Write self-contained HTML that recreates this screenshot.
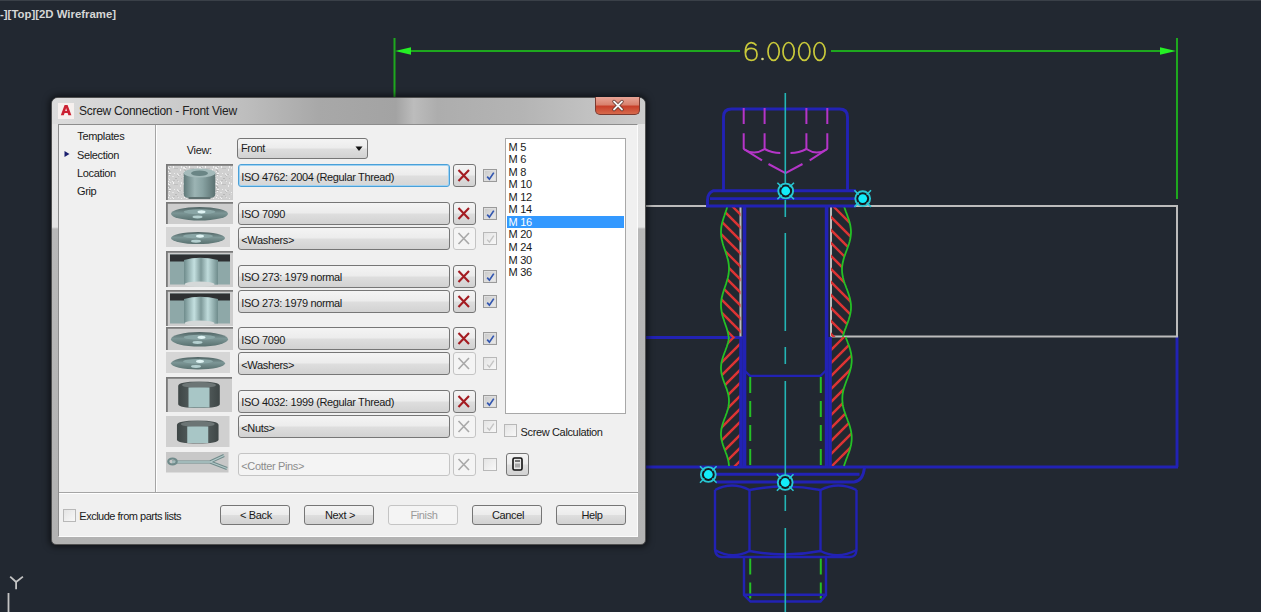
<!DOCTYPE html>
<html><head><meta charset="utf-8"><style>
html,body{margin:0;padding:0;width:1261px;height:612px;overflow:hidden;background:#222831;}
body{position:relative;font-family:"Liberation Sans",sans-serif;}
.a{position:absolute;box-sizing:border-box;}
.t{position:absolute;line-height:1;white-space:nowrap;}
.frame{border:1px solid #505050;border-radius:7px 7px 5px 5px;background:linear-gradient(180deg,#e2e2e2 0px,#e4e4e4 129px,#b8b8b8 131px,#b2b2b2 100%);box-shadow:0 0 6px 2px rgba(0,0,0,0.55);}
.titlebar{border-radius:6px 6px 0 0;background:linear-gradient(90deg,#dcdcdc 0%,#d2d2d2 15%,#bdbdbd 33%,#a8a8a8 45%,#a3a3a3 58%,#bcbcbc 61%,#adadad 65%,#b4b4b4 79%,#c2c2c2 91%,#cccccc 100%);}
.closeb{border:1px solid #7a3a30;border-top:none;border-radius:0 0 5px 5px;background:linear-gradient(180deg,#e8a496 0%,#d9826e 45%,#c8402a 55%,#d66a4c 100%);}
.client{border:1px solid;border-color:#8d8d8d #fcfcfc #fcfcfc #8d8d8d;background:#f0f0f0;}
.btn{border:1px solid #767676;border-radius:3px;background:linear-gradient(180deg,#f4f4f4 0%,#ececec 48%,#dedede 52%,#d2d2d2 100%);}
.btn.focus{border:1px solid #4aa0d8;box-shadow:inset 0 0 0 1px #9fd2f2;background:linear-gradient(180deg,#f4f4f4 0%,#ececec 48%,#dedede 52%,#d6d6d6 100%);}
.btndis{border:1px solid #c4c4c4;border-radius:3px;background:#f4f4f4;}
.fdis{border:1px solid #c4c4c4;border-radius:3px;background:#f4f4f4;}
.cb{border:1px solid #9a9a9a;background:linear-gradient(135deg,#c8c8c8,#ececec);box-shadow:inset 0 0 0 1px #dedede;}
.cbdis{border:1px solid #b8b8b8;background:linear-gradient(135deg,#e4e4e4,#f8f8f8);}
.lst{border:1px solid #a8a8a8;background:#fff;}
</style></head><body>

<svg class="a" style="left:0;top:0" width="1261" height="612" viewBox="0 0 1261 612">
<rect x="0" y="0" width="1261" height="1" fill="#3a4048"/>
<text x="0" y="18" font-family="Liberation Sans" font-weight="bold" font-size="11.4" fill="#d6d6d6">-][Top][2D Wireframe]</text>
<!-- Y axis -->
<path d="M10.2,576.6 L16.1,582 L22.9,576.6 M16.1,582 V589.3 M8.5,593 V612" stroke="#c4c4c4" stroke-width="1.8" fill="none"/>
<!-- dimension -->
<g stroke="#1ea81e" stroke-width="2" fill="none">
<line x1="394.5" y1="38" x2="394.5" y2="100"/>
<line x1="1177" y1="38" x2="1177" y2="199"/>
<line x1="405" y1="51" x2="740" y2="51"/>
<line x1="831" y1="51" x2="1165" y2="51"/>
</g>
<polygon fill="#25f025" points="395,51 411,47.3 411,54.7"/>
<polygon fill="#25f025" points="1176,51 1160,47.3 1160,54.7"/>
<g stroke="#c9c93a" stroke-width="1.7" fill="none">
<path d="M756.5,45.5 Q754,42.5 751,42.6 Q745.5,43.5 745.3,52 Q745.3,60.3 751.2,60.3 Q757,60.3 757,54.2 Q757,48.3 751.2,48.3 Q746,48.3 745.5,53.5"/>
<ellipse cx="773.6" cy="51.4" rx="5.6" ry="8.9"/>
<ellipse cx="788.6" cy="51.4" rx="5.6" ry="8.9"/>
<ellipse cx="804.3" cy="51.4" rx="5.6" ry="8.9"/>
<ellipse cx="819.5" cy="51.4" rx="5.6" ry="8.9"/>
</g>
<circle cx="762.5" cy="59" r="1.3" fill="#d8d880"/>
<!-- plates -->
<g stroke="#2222b4" stroke-width="2.9" fill="none">
<line x1="640" y1="337.5" x2="744" y2="337.5"/>
<polyline points="1177,336 1177,467"/>
<line x1="640" y1="467" x2="1178" y2="467"/>
</g>
<g stroke="#bcbcbc" stroke-width="2" fill="none">
<line x1="640" y1="206" x2="708" y2="206"/>
<polyline points="853,206 1177,206 1177,336.5 831,336.5"/>
<line x1="740.5" y1="206" x2="740.5" y2="336.5"/>
<line x1="831" y1="206" x2="831" y2="336.5"/>
</g>
<defs>
<clipPath id="c1"><path d="M727.5,206.0 L726.9,208.0 L726.3,210.0 L725.6,212.0 L724.9,214.0 L724.3,216.0 L723.6,218.0 L723.0,220.0 L722.4,222.0 L721.9,224.0 L721.5,226.0 L721.2,228.0 L721.1,230.0 L721.0,232.0 L721.1,234.0 L721.2,236.0 L721.5,238.0 L721.9,240.0 L722.4,242.0 L722.9,244.0 L723.5,246.0 L724.2,248.0 L724.9,250.0 L725.6,252.0 L726.2,254.0 L726.9,256.0 L727.4,258.0 L728.0,260.0 L728.4,262.0 L728.7,264.0 L728.9,266.0 L729.0,268.0 L729.0,270.0 L728.8,272.0 L728.6,274.0 L728.2,276.0 L727.8,278.0 L727.2,280.0 L726.6,282.0 L726.0,284.0 L725.3,286.0 L724.6,288.0 L723.9,290.0 L723.3,292.0 L722.7,294.0 L722.2,296.0 L721.7,298.0 L721.4,300.0 L721.1,302.0 L721.0,304.0 L721.0,306.0 L721.1,308.0 L721.4,310.0 L721.7,312.0 L722.1,314.0 L722.6,316.0 L723.2,318.0 L723.9,320.0 L724.5,322.0 L725.2,324.0 L725.9,326.0 L726.6,328.0 L727.2,330.0 L727.7,332.0 L728.2,334.0 L728.5,336.0 L728.7,337.0 L740.5,337.0 L740.5,206.0 Z"/></clipPath>
<clipPath id="c2"><path d="M728.9,337.0 L728.7,339.0 L728.4,341.0 L727.9,343.0 L727.3,345.0 L726.7,347.0 L725.9,349.0 L725.2,351.0 L724.4,353.0 L723.7,355.0 L723.0,357.0 L722.4,359.0 L721.9,361.0 L721.4,363.0 L721.2,365.0 L721.0,367.0 L721.0,369.0 L721.2,371.0 L721.4,373.0 L721.9,375.0 L722.4,377.0 L723.0,379.0 L723.7,381.0 L724.4,383.0 L725.2,385.0 L725.9,387.0 L726.7,389.0 L727.3,391.0 L727.9,393.0 L728.4,395.0 L728.7,397.0 L728.9,399.0 L729.0,401.0 L728.9,403.0 L728.7,405.0 L728.4,407.0 L727.9,409.0 L727.3,411.0 L726.7,413.0 L725.9,415.0 L725.2,417.0 L724.4,419.0 L723.7,421.0 L723.0,423.0 L722.4,425.0 L721.9,427.0 L721.4,429.0 L721.2,431.0 L721.0,433.0 L721.0,435.0 L721.2,437.0 L721.4,439.0 L721.9,441.0 L722.4,443.0 L723.0,445.0 L723.7,447.0 L724.4,449.0 L725.2,451.0 L725.9,453.0 L726.7,455.0 L727.3,457.0 L727.9,459.0 L728.4,461.0 L728.7,463.0 L728.9,465.0 L729.0,466.0 L740.0,466.0 L740.0,337.0 Z"/></clipPath>
<clipPath id="c3"><path d="M843.9,206.0 L844.6,208.0 L845.3,210.0 L846.0,212.0 L846.8,214.0 L847.5,216.0 L848.2,218.0 L848.9,220.0 L849.5,222.0 L850.0,224.0 L850.4,226.0 L850.7,228.0 L850.9,230.0 L851.0,232.0 L850.9,234.0 L850.7,236.0 L850.4,238.0 L850.0,240.0 L849.5,242.0 L848.9,244.0 L848.2,246.0 L847.5,248.0 L846.8,250.0 L846.0,252.0 L845.3,254.0 L844.6,256.0 L843.9,258.0 L843.4,260.0 L842.9,262.0 L842.5,264.0 L842.2,266.0 L842.0,268.0 L842.0,270.0 L842.1,272.0 L842.3,274.0 L842.7,276.0 L843.1,278.0 L843.6,280.0 L844.2,282.0 L844.9,284.0 L845.7,286.0 L846.4,288.0 L847.2,290.0 L847.9,292.0 L848.6,294.0 L849.2,296.0 L849.8,298.0 L850.2,300.0 L850.6,302.0 L850.9,304.0 L851.0,306.0 L851.0,308.0 L850.9,310.0 L850.6,312.0 L850.2,314.0 L849.8,316.0 L849.2,318.0 L848.6,320.0 L847.9,322.0 L847.2,324.0 L846.4,326.0 L845.7,328.0 L844.9,330.0 L844.2,332.0 L843.6,334.0 L843.1,336.0 L842.9,337.0 L831.0,337.0 L831.0,206.0 Z"/></clipPath>
<clipPath id="c4"><path d="M845.7,337.0 L846.4,339.0 L847.2,341.0 L847.9,343.0 L848.7,345.0 L849.4,347.0 L850.0,349.0 L850.5,351.0 L851.0,353.0 L851.3,355.0 L851.6,357.0 L851.7,359.0 L851.7,361.0 L851.6,363.0 L851.3,365.0 L851.0,367.0 L850.5,369.0 L850.0,371.0 L849.4,373.0 L848.7,375.0 L847.9,377.0 L847.2,379.0 L846.4,381.0 L845.7,383.0 L845.0,385.0 L844.3,387.0 L843.7,389.0 L843.2,391.0 L842.8,393.0 L842.5,395.0 L842.4,397.0 L842.3,399.0 L842.4,401.0 L842.5,403.0 L842.8,405.0 L843.2,407.0 L843.7,409.0 L844.3,411.0 L845.0,413.0 L845.7,415.0 L846.4,417.0 L847.2,419.0 L847.9,421.0 L848.7,423.0 L849.4,425.0 L850.0,427.0 L850.5,429.0 L851.0,431.0 L851.3,433.0 L851.6,435.0 L851.7,437.0 L851.7,439.0 L851.6,441.0 L851.3,443.0 L851.0,445.0 L850.5,447.0 L850.0,449.0 L849.4,451.0 L848.7,453.0 L847.9,455.0 L847.2,457.0 L846.4,459.0 L845.7,461.0 L845.0,463.0 L844.3,465.0 L844.0,466.0 L831.0,466.0 L831.0,337.0 Z"/></clipPath>
</defs>
<g stroke="#dc3434" stroke-width="2.3" fill="none">
<path clip-path="url(#c1)" d="M715.0,163.0 L742.0,190.0 M715.0,176.0 L742.0,203.0 M715.0,189.0 L742.0,216.0 M715.0,202.0 L742.0,229.0 M715.0,215.0 L742.0,242.0 M715.0,228.0 L742.0,255.0 M715.0,241.0 L742.0,268.0 M715.0,254.0 L742.0,281.0 M715.0,267.0 L742.0,294.0 M715.0,280.0 L742.0,307.0 M715.0,293.0 L742.0,320.0 M715.0,306.0 L742.0,333.0 M715.0,319.0 L742.0,346.0 M715.0,332.0 L742.0,359.0 M715.0,345.0 L742.0,372.0"/>
<path clip-path="url(#c3)" d="M829.0,163.0 L856.0,190.0 M829.0,176.0 L856.0,203.0 M829.0,189.0 L856.0,216.0 M829.0,202.0 L856.0,229.0 M829.0,215.0 L856.0,242.0 M829.0,228.0 L856.0,255.0 M829.0,241.0 L856.0,268.0 M829.0,254.0 L856.0,281.0 M829.0,267.0 L856.0,294.0 M829.0,280.0 L856.0,307.0 M829.0,293.0 L856.0,320.0 M829.0,306.0 L856.0,333.0 M829.0,319.0 L856.0,346.0 M829.0,332.0 L856.0,359.0 M829.0,345.0 L856.0,372.0"/>
<path clip-path="url(#c2)" d="M715.0,317.0 L745.0,287.0 M715.0,330.0 L745.0,300.0 M715.0,343.0 L745.0,313.0 M715.0,356.0 L745.0,326.0 M715.0,369.0 L745.0,339.0 M715.0,382.0 L745.0,352.0 M715.0,395.0 L745.0,365.0 M715.0,408.0 L745.0,378.0 M715.0,421.0 L745.0,391.0 M715.0,434.0 L745.0,404.0 M715.0,447.0 L745.0,417.0 M715.0,460.0 L745.0,430.0 M715.0,473.0 L745.0,443.0 M715.0,486.0 L745.0,456.0 M715.0,499.0 L745.0,469.0 M715.0,512.0 L745.0,482.0"/>
<path clip-path="url(#c4)" d="M825.0,317.0 L856.0,286.0 M825.0,330.0 L856.0,299.0 M825.0,343.0 L856.0,312.0 M825.0,356.0 L856.0,325.0 M825.0,369.0 L856.0,338.0 M825.0,382.0 L856.0,351.0 M825.0,395.0 L856.0,364.0 M825.0,408.0 L856.0,377.0 M825.0,421.0 L856.0,390.0 M825.0,434.0 L856.0,403.0 M825.0,447.0 L856.0,416.0 M825.0,460.0 L856.0,429.0 M825.0,473.0 L856.0,442.0 M825.0,486.0 L856.0,455.0 M825.0,499.0 L856.0,468.0 M825.0,512.0 L856.0,481.0"/>
</g>
<g stroke="#25c025" stroke-width="1.8" fill="none">
<path d="M727.5,206.0 L726.9,208.0 L726.3,210.0 L725.6,212.0 L724.9,214.0 L724.3,216.0 L723.6,218.0 L723.0,220.0 L722.4,222.0 L721.9,224.0 L721.5,226.0 L721.2,228.0 L721.1,230.0 L721.0,232.0 L721.1,234.0 L721.2,236.0 L721.5,238.0 L721.9,240.0 L722.4,242.0 L722.9,244.0 L723.5,246.0 L724.2,248.0 L724.9,250.0 L725.6,252.0 L726.2,254.0 L726.9,256.0 L727.4,258.0 L728.0,260.0 L728.4,262.0 L728.7,264.0 L728.9,266.0 L729.0,268.0 L729.0,270.0 L728.8,272.0 L728.6,274.0 L728.2,276.0 L727.8,278.0 L727.2,280.0 L726.6,282.0 L726.0,284.0 L725.3,286.0 L724.6,288.0 L723.9,290.0 L723.3,292.0 L722.7,294.0 L722.2,296.0 L721.7,298.0 L721.4,300.0 L721.1,302.0 L721.0,304.0 L721.0,306.0 L721.1,308.0 L721.4,310.0 L721.7,312.0 L722.1,314.0 L722.6,316.0 L723.2,318.0 L723.9,320.0 L724.5,322.0 L725.2,324.0 L725.9,326.0 L726.6,328.0 L727.2,330.0 L727.7,332.0 L728.2,334.0 L728.5,336.0 L728.7,337.0"/>
<path d="M728.9,337.0 L728.7,339.0 L728.4,341.0 L727.9,343.0 L727.3,345.0 L726.7,347.0 L725.9,349.0 L725.2,351.0 L724.4,353.0 L723.7,355.0 L723.0,357.0 L722.4,359.0 L721.9,361.0 L721.4,363.0 L721.2,365.0 L721.0,367.0 L721.0,369.0 L721.2,371.0 L721.4,373.0 L721.9,375.0 L722.4,377.0 L723.0,379.0 L723.7,381.0 L724.4,383.0 L725.2,385.0 L725.9,387.0 L726.7,389.0 L727.3,391.0 L727.9,393.0 L728.4,395.0 L728.7,397.0 L728.9,399.0 L729.0,401.0 L728.9,403.0 L728.7,405.0 L728.4,407.0 L727.9,409.0 L727.3,411.0 L726.7,413.0 L725.9,415.0 L725.2,417.0 L724.4,419.0 L723.7,421.0 L723.0,423.0 L722.4,425.0 L721.9,427.0 L721.4,429.0 L721.2,431.0 L721.0,433.0 L721.0,435.0 L721.2,437.0 L721.4,439.0 L721.9,441.0 L722.4,443.0 L723.0,445.0 L723.7,447.0 L724.4,449.0 L725.2,451.0 L725.9,453.0 L726.7,455.0 L727.3,457.0 L727.9,459.0 L728.4,461.0 L728.7,463.0 L728.9,465.0 L729.0,466.0"/>
<path d="M843.9,206.0 L844.6,208.0 L845.3,210.0 L846.0,212.0 L846.8,214.0 L847.5,216.0 L848.2,218.0 L848.9,220.0 L849.5,222.0 L850.0,224.0 L850.4,226.0 L850.7,228.0 L850.9,230.0 L851.0,232.0 L850.9,234.0 L850.7,236.0 L850.4,238.0 L850.0,240.0 L849.5,242.0 L848.9,244.0 L848.2,246.0 L847.5,248.0 L846.8,250.0 L846.0,252.0 L845.3,254.0 L844.6,256.0 L843.9,258.0 L843.4,260.0 L842.9,262.0 L842.5,264.0 L842.2,266.0 L842.0,268.0 L842.0,270.0 L842.1,272.0 L842.3,274.0 L842.7,276.0 L843.1,278.0 L843.6,280.0 L844.2,282.0 L844.9,284.0 L845.7,286.0 L846.4,288.0 L847.2,290.0 L847.9,292.0 L848.6,294.0 L849.2,296.0 L849.8,298.0 L850.2,300.0 L850.6,302.0 L850.9,304.0 L851.0,306.0 L851.0,308.0 L850.9,310.0 L850.6,312.0 L850.2,314.0 L849.8,316.0 L849.2,318.0 L848.6,320.0 L847.9,322.0 L847.2,324.0 L846.4,326.0 L845.7,328.0 L844.9,330.0 L844.2,332.0 L843.6,334.0 L843.1,336.0 L842.9,337.0"/>
<path d="M845.7,337.0 L846.4,339.0 L847.2,341.0 L847.9,343.0 L848.7,345.0 L849.4,347.0 L850.0,349.0 L850.5,351.0 L851.0,353.0 L851.3,355.0 L851.6,357.0 L851.7,359.0 L851.7,361.0 L851.6,363.0 L851.3,365.0 L851.0,367.0 L850.5,369.0 L850.0,371.0 L849.4,373.0 L848.7,375.0 L847.9,377.0 L847.2,379.0 L846.4,381.0 L845.7,383.0 L845.0,385.0 L844.3,387.0 L843.7,389.0 L843.2,391.0 L842.8,393.0 L842.5,395.0 L842.4,397.0 L842.3,399.0 L842.4,401.0 L842.5,403.0 L842.8,405.0 L843.2,407.0 L843.7,409.0 L844.3,411.0 L845.0,413.0 L845.7,415.0 L846.4,417.0 L847.2,419.0 L847.9,421.0 L848.7,423.0 L849.4,425.0 L850.0,427.0 L850.5,429.0 L851.0,431.0 L851.3,433.0 L851.6,435.0 L851.7,437.0 L851.7,439.0 L851.6,441.0 L851.3,443.0 L851.0,445.0 L850.5,447.0 L850.0,449.0 L849.4,451.0 L848.7,453.0 L847.9,455.0 L847.2,457.0 L846.4,459.0 L845.7,461.0 L845.0,463.0 L844.3,465.0 L844.0,466.0"/>
</g>

<!-- shank -->
<g stroke="#2222b4" stroke-width="3.6" fill="none">
<line x1="744.5" y1="206" x2="744.5" y2="467"/>
<line x1="826.6" y1="206" x2="826.6" y2="467"/>
<line x1="741" y1="337" x2="741" y2="467"/>
<line x1="830" y1="337" x2="830" y2="467"/>
</g>
<path d="M743.5,369.5 L750,375.8 H820.5 L827,369.5" stroke="#2222b4" stroke-width="2.2" fill="none"/>
<g stroke="#25c025" stroke-width="2" fill="none" stroke-dasharray="16 8">
<line x1="750.2" y1="377" x2="750.2" y2="466"/>
<line x1="820.8" y1="377" x2="820.8" y2="466"/>
<line x1="750.2" y1="558.5" x2="750.2" y2="600"/>
<line x1="820.8" y1="558.5" x2="820.8" y2="600"/>
</g>
<!-- head -->
<g stroke="#2222b4" stroke-width="2.9" fill="none">
<path d="M723.5,190.5 V117 Q723.5,109 731.5,109 H839.5 Q847.5,109 847.5,117 V190.5"/>
<path d="M856,190.7 H713.5 Q707.5,193 707.5,200 V206 H856"/>
<path d="M710,198.6 H856"/>
</g>
<g stroke="#b535c8" stroke-width="2" fill="none">
<path d="M743.7,108 V124 M743.7,133.3 V149 M764.6,108 V124 M764.6,133.3 V149 M806.4,108 V124 M806.4,133.3 V149 M827.3,108 V124 M827.3,133.3 V149"/>
<path d="M743.7,149 Q754,156 764.6,149 Q772,153 780.3,153"/>
<path d="M827.3,149 Q817,156 806.4,149 Q799,153 790.5,153"/>
<path d="M743.7,149 L762,160.4 M768.5,164 L785.5,173.2 L802.5,164 M809.7,160.4 L827.3,149"/>
</g>
<!-- lower washer -->
<g stroke="#2222b4" stroke-width="2.9" fill="none">
<path d="M712,474.3 H859.5"/>
<path d="M864.5,467.5 Q863,481 854,482 H716"/>
</g>
<!-- nut -->
<g stroke="#2222b4" stroke-width="2.4" fill="none">
<path d="M715,490 V550 M749.5,490 V551 M820.5,490 V551 M856.5,490 V550"/>
<path d="M715,490 Q732,481 749.5,490 Q785,483 820.5,490 Q838,481 856.5,490"/>
<path d="M715,550 Q732,560 749.5,551 Q785,558 820.5,551 Q838,560 856.5,550"/>
<path d="M715,550 Q716,557 722,557 H850 Q856,557 856.5,550"/>
<path d="M744,557 V595 L750.5,601.5 H820.5 L826,595 V557 M744,594.7 H826"/>
</g>
<!-- center line -->
<path d="M785.3,93 V183 M785.3,200 V217 M785.3,233 V331 M785.3,347 V364 M785.3,381 V479 M785.3,495 V511 M785.3,528 V612" stroke="#23b5b5" stroke-width="1.6" fill="none"/>
<g><circle cx="785.7" cy="191.0" r="7.4" fill="#141a20" stroke="#28c8d4" stroke-width="1.9"/><circle cx="785.7" cy="191.0" r="4.4" fill="#12ecfa"/><path d="M789.7,195.0 l4.3,4.3 M781.7,195.0 l-4.3,4.3 M789.7,187.0 l4.3,-4.3 M781.7,187.0 l-4.3,-4.3" stroke="#28c8d4" stroke-width="1.6"/></g><g><circle cx="862.7" cy="198.6" r="7.4" fill="#141a20" stroke="#28c8d4" stroke-width="1.9"/><circle cx="862.7" cy="198.6" r="4.4" fill="#12ecfa"/><path d="M866.7,202.6 l4.3,4.3 M858.7,202.6 l-4.3,4.3 M866.7,194.6 l4.3,-4.3 M858.7,194.6 l-4.3,-4.3" stroke="#28c8d4" stroke-width="1.6"/></g><g><circle cx="708.3" cy="474.5" r="7.4" fill="#141a20" stroke="#28c8d4" stroke-width="1.9"/><circle cx="708.3" cy="474.5" r="4.4" fill="#12ecfa"/><path d="M712.3,478.5 l4.3,4.3 M704.3,478.5 l-4.3,4.3 M712.3,470.5 l4.3,-4.3 M704.3,470.5 l-4.3,-4.3" stroke="#28c8d4" stroke-width="1.6"/></g><g><circle cx="785.2" cy="482.5" r="7.4" fill="#141a20" stroke="#28c8d4" stroke-width="1.9"/><circle cx="785.2" cy="482.5" r="4.4" fill="#12ecfa"/><path d="M789.2,486.5 l4.3,4.3 M781.2,486.5 l-4.3,4.3 M789.2,478.5 l4.3,-4.3 M781.2,478.5 l-4.3,-4.3" stroke="#28c8d4" stroke-width="1.6"/></g>
</svg>

<div class="a frame" style="left:51px;top:97px;width:595px;height:448px;"></div>
<div class="a titlebar" style="left:52px;top:98px;width:593px;height:26px;"></div>
<div class="a" style="left:58px;top:103px;width:16px;height:16px;background:#f6f0ee;"></div>
<svg class="a" style="left:58px;top:103px" width="16" height="16"><path d="M2.8,12.3 L6.6,2 H9.6 L13.4,12.3 H10.4 L9.6,10 H6.6 L5.8,12.3 Z M7.2,7.9 H9 L8.1,5 Z" fill="#cc2233" fill-rule="evenodd"/></svg>
<div class="t" style="left:78.9px;top:105.14px;font-size:12px;color:#222;letter-spacing:-0.25px;">Screw Connection - Front View</div>
<div class="a closeb" style="left:595px;top:97px;width:45px;height:18px;"></div>
<svg class="a" style="left:611px;top:99px" width="14" height="13"><path d="M3,2.5 L11,10.5 M11,2.5 L3,10.5" stroke="#5a2a22" stroke-width="3.2" stroke-linecap="round"/><path d="M3,2.5 L11,10.5 M11,2.5 L3,10.5" stroke="#f4f4f4" stroke-width="1.8" stroke-linecap="round"/></svg>
<div class="a client" style="left:58px;top:124px;width:580px;height:413px;"></div>
<div class="a" style="left:155px;top:125px;width:1px;height:368px;background:#a5a5a5;"></div>
<div class="a" style="left:156px;top:125px;width:1px;height:368px;background:#fff;"></div>
<div class="a" style="left:59px;top:492px;width:579px;height:1px;background:#a5a5a5;"></div>
<div class="a" style="left:59px;top:493px;width:579px;height:1px;background:#fff;"></div>
<div class="t" style="left:77.3px;top:130.99px;font-size:11px;color:#1a1a1a;letter-spacing:-0.35px;">Templates</div>
<svg class="a" style="left:63px;top:150px" width="8" height="8"><path d="M1.5,1 L6.5,4 L1.5,7 Z" fill="#1b1f6e"/></svg>
<div class="t" style="left:77px;top:149.59px;font-size:11px;color:#1a1a1a;letter-spacing:-0.35px;">Selection</div>
<div class="t" style="left:77px;top:167.89px;font-size:11px;color:#1a1a1a;letter-spacing:-0.35px;">Location</div>
<div class="t" style="left:77px;top:185.59px;font-size:11px;color:#1a1a1a;letter-spacing:-0.35px;">Grip</div>
<div class="t" style="left:186.8px;top:144.59px;font-size:11px;color:#222;letter-spacing:-0.35px;">View:</div>
<div class="a btn" style="left:237px;top:138px;width:131px;height:21px;"></div>
<div class="t" style="left:241px;top:143.29px;font-size:11px;color:#1a1a1a;letter-spacing:-0.35px;">Front</div>
<svg class="a" style="left:355px;top:146px" width="9" height="6"><path d="M0.5,0.5 H7.5 L4,5 Z" fill="#111"/></svg>
<div class="a btn focus" style="left:238px;top:164px;width:212px;height:23px;"></div>
<div class="t" style="left:241.3px;top:171.69px;font-size:11px;color:#1a1a1a;letter-spacing:-0.35px;">ISO 4762: 2004 (Regular Thread)</div>
<div class="a btn" style="left:452.5px;top:164px;width:23.5px;height:23px;"></div>
<svg class="a" style="left:455px;top:167px" width="18" height="17"><path d="M3.5,3 L14,14 M14,3 L3.5,14" stroke="#a41c22" stroke-width="2.1"/></svg>
<div class="a cb" style="left:483px;top:169px;width:13.5px;height:13px;"></div>
<svg class="a" style="left:483px;top:169px" width="14" height="14"><path d="M4.2,7.6 L6.4,10.2 L10.8,3.6" stroke="#3256b0" stroke-width="1.7" fill="none"/></svg>
<div class="a btn" style="left:238px;top:201.6px;width:212px;height:23px;"></div>
<div class="t" style="left:241.3px;top:209.29px;font-size:11px;color:#1a1a1a;letter-spacing:-0.35px;">ISO 7090</div>
<div class="a btn" style="left:452.5px;top:201.6px;width:23.5px;height:23px;"></div>
<svg class="a" style="left:455px;top:204.6px" width="18" height="17"><path d="M3.5,3 L14,14 M14,3 L3.5,14" stroke="#a41c22" stroke-width="2.1"/></svg>
<div class="a cb" style="left:483px;top:206.6px;width:13.5px;height:13px;"></div>
<svg class="a" style="left:483px;top:206.6px" width="14" height="14"><path d="M4.2,7.6 L6.4,10.2 L10.8,3.6" stroke="#3256b0" stroke-width="1.7" fill="none"/></svg>
<div class="a btn" style="left:238px;top:226.9px;width:212px;height:23px;"></div>
<div class="t" style="left:241.3px;top:234.59px;font-size:11px;color:#1a1a1a;letter-spacing:-0.35px;">&lt;Washers&gt;</div>
<div class="a btndis" style="left:452.5px;top:226.9px;width:23.5px;height:23px;"></div>
<svg class="a" style="left:455px;top:229.9px" width="18" height="17"><path d="M3.5,3 L14,14 M14,3 L3.5,14" stroke="#a8a8a8" stroke-width="1.6"/></svg>
<div class="a cbdis" style="left:483px;top:231.9px;width:13.5px;height:13px;"></div>
<svg class="a" style="left:483px;top:231.9px" width="14" height="14"><path d="M4.2,7.6 L6.4,10.2 L10.8,3.6" stroke="#c4c4c4" stroke-width="1.4" fill="none"/></svg>
<div class="a btn" style="left:238px;top:264.6px;width:212px;height:23px;"></div>
<div class="t" style="left:241.3px;top:272.29px;font-size:11px;color:#1a1a1a;letter-spacing:-0.35px;">ISO 273: 1979 normal</div>
<div class="a btn" style="left:452.5px;top:264.6px;width:23.5px;height:23px;"></div>
<svg class="a" style="left:455px;top:267.6px" width="18" height="17"><path d="M3.5,3 L14,14 M14,3 L3.5,14" stroke="#a41c22" stroke-width="2.1"/></svg>
<div class="a cb" style="left:483px;top:269.6px;width:13.5px;height:13px;"></div>
<svg class="a" style="left:483px;top:269.6px" width="14" height="14"><path d="M4.2,7.6 L6.4,10.2 L10.8,3.6" stroke="#3256b0" stroke-width="1.7" fill="none"/></svg>
<div class="a btn" style="left:238px;top:290px;width:212px;height:23px;"></div>
<div class="t" style="left:241.3px;top:297.69px;font-size:11px;color:#1a1a1a;letter-spacing:-0.35px;">ISO 273: 1979 normal</div>
<div class="a btn" style="left:452.5px;top:290px;width:23.5px;height:23px;"></div>
<svg class="a" style="left:455px;top:293px" width="18" height="17"><path d="M3.5,3 L14,14 M14,3 L3.5,14" stroke="#a41c22" stroke-width="2.1"/></svg>
<div class="a cb" style="left:483px;top:295px;width:13.5px;height:13px;"></div>
<svg class="a" style="left:483px;top:295px" width="14" height="14"><path d="M4.2,7.6 L6.4,10.2 L10.8,3.6" stroke="#3256b0" stroke-width="1.7" fill="none"/></svg>
<div class="a btn" style="left:238px;top:327.2px;width:212px;height:23px;"></div>
<div class="t" style="left:241.3px;top:334.89px;font-size:11px;color:#1a1a1a;letter-spacing:-0.35px;">ISO 7090</div>
<div class="a btn" style="left:452.5px;top:327.2px;width:23.5px;height:23px;"></div>
<svg class="a" style="left:455px;top:330.2px" width="18" height="17"><path d="M3.5,3 L14,14 M14,3 L3.5,14" stroke="#a41c22" stroke-width="2.1"/></svg>
<div class="a cb" style="left:483px;top:332.2px;width:13.5px;height:13px;"></div>
<svg class="a" style="left:483px;top:332.2px" width="14" height="14"><path d="M4.2,7.6 L6.4,10.2 L10.8,3.6" stroke="#3256b0" stroke-width="1.7" fill="none"/></svg>
<div class="a btn" style="left:238px;top:352.2px;width:212px;height:23px;"></div>
<div class="t" style="left:241.3px;top:359.89px;font-size:11px;color:#1a1a1a;letter-spacing:-0.35px;">&lt;Washers&gt;</div>
<div class="a btndis" style="left:452.5px;top:352.2px;width:23.5px;height:23px;"></div>
<svg class="a" style="left:455px;top:355.2px" width="18" height="17"><path d="M3.5,3 L14,14 M14,3 L3.5,14" stroke="#a8a8a8" stroke-width="1.6"/></svg>
<div class="a cbdis" style="left:483px;top:357.2px;width:13.5px;height:13px;"></div>
<svg class="a" style="left:483px;top:357.2px" width="14" height="14"><path d="M4.2,7.6 L6.4,10.2 L10.8,3.6" stroke="#c4c4c4" stroke-width="1.4" fill="none"/></svg>
<div class="a btn" style="left:238px;top:389.7px;width:212px;height:23px;"></div>
<div class="t" style="left:241.3px;top:397.39px;font-size:11px;color:#1a1a1a;letter-spacing:-0.35px;">ISO 4032: 1999 (Regular Thread)</div>
<div class="a btn" style="left:452.5px;top:389.7px;width:23.5px;height:23px;"></div>
<svg class="a" style="left:455px;top:392.7px" width="18" height="17"><path d="M3.5,3 L14,14 M14,3 L3.5,14" stroke="#a41c22" stroke-width="2.1"/></svg>
<div class="a cb" style="left:483px;top:394.7px;width:13.5px;height:13px;"></div>
<svg class="a" style="left:483px;top:394.7px" width="14" height="14"><path d="M4.2,7.6 L6.4,10.2 L10.8,3.6" stroke="#3256b0" stroke-width="1.7" fill="none"/></svg>
<div class="a btn" style="left:238px;top:415.2px;width:212px;height:23px;"></div>
<div class="t" style="left:241.3px;top:422.89px;font-size:11px;color:#1a1a1a;letter-spacing:-0.35px;">&lt;Nuts&gt;</div>
<div class="a btndis" style="left:452.5px;top:415.2px;width:23.5px;height:23px;"></div>
<svg class="a" style="left:455px;top:418.2px" width="18" height="17"><path d="M3.5,3 L14,14 M14,3 L3.5,14" stroke="#a8a8a8" stroke-width="1.6"/></svg>
<div class="a cbdis" style="left:483px;top:420.2px;width:13.5px;height:13px;"></div>
<svg class="a" style="left:483px;top:420.2px" width="14" height="14"><path d="M4.2,7.6 L6.4,10.2 L10.8,3.6" stroke="#c4c4c4" stroke-width="1.4" fill="none"/></svg>
<div class="a fdis" style="left:238px;top:453px;width:212px;height:23px;"></div>
<div class="t" style="left:241.3px;top:460.69px;font-size:11px;color:#8d8d8d;letter-spacing:-0.35px;">&lt;Cotter Pins&gt;</div>
<div class="a btndis" style="left:452.5px;top:453px;width:23.5px;height:23px;"></div>
<svg class="a" style="left:455px;top:456px" width="18" height="17"><path d="M3.5,3 L14,14 M14,3 L3.5,14" stroke="#a8a8a8" stroke-width="1.6"/></svg>
<div class="a cbdis" style="left:483px;top:458px;width:13.5px;height:13px;"></div>
<div class="a lst" style="left:505px;top:138px;width:121px;height:276px;"></div>
<div class="a" style="left:507px;top:215.5px;width:117px;height:12.5px;background:#3399ff;"></div>
<div class="t" style="left:508.6px;top:141.59px;font-size:11px;color:#1a1a1a;letter-spacing:-0.3px;">M 5</div>
<div class="t" style="left:508.6px;top:154.14px;font-size:11px;color:#1a1a1a;letter-spacing:-0.3px;">M 6</div>
<div class="t" style="left:508.6px;top:166.69px;font-size:11px;color:#1a1a1a;letter-spacing:-0.3px;">M 8</div>
<div class="t" style="left:508.6px;top:179.24px;font-size:11px;color:#1a1a1a;letter-spacing:-0.3px;">M 10</div>
<div class="t" style="left:508.6px;top:191.79px;font-size:11px;color:#1a1a1a;letter-spacing:-0.3px;">M 12</div>
<div class="t" style="left:508.6px;top:204.34px;font-size:11px;color:#1a1a1a;letter-spacing:-0.3px;">M 14</div>
<div class="t" style="left:508.6px;top:216.89px;font-size:11px;color:#fff;letter-spacing:-0.3px;">M 16</div>
<div class="t" style="left:508.6px;top:229.44px;font-size:11px;color:#1a1a1a;letter-spacing:-0.3px;">M 20</div>
<div class="t" style="left:508.6px;top:241.99px;font-size:11px;color:#1a1a1a;letter-spacing:-0.3px;">M 24</div>
<div class="t" style="left:508.6px;top:254.54px;font-size:11px;color:#1a1a1a;letter-spacing:-0.3px;">M 30</div>
<div class="t" style="left:508.6px;top:267.09px;font-size:11px;color:#1a1a1a;letter-spacing:-0.3px;">M 36</div>
<div class="a cbdis" style="left:504.3px;top:424px;width:12.7px;height:12.8px;"></div>
<div class="t" style="left:520.5px;top:426.99px;font-size:11px;color:#1a1a1a;letter-spacing:-0.35px;">Screw Calculation</div>
<div class="a btn" style="left:506px;top:452.5px;width:23px;height:23.5px;"></div>
<svg class="a" style="left:509px;top:455px" width="17" height="18"><rect x="4" y="3" width="9" height="12" rx="1.5" fill="#e8e8e8" stroke="#111" stroke-width="1.6"/><rect x="6" y="5" width="5" height="2" fill="#777"/><rect x="6" y="8.5" width="5" height="4" fill="#aaa"/></svg>
<div class="a cbdis" style="left:63.3px;top:509px;width:12.3px;height:12.6px;"></div>
<div class="t" style="left:79.3px;top:511.19px;font-size:11px;color:#1a1a1a;letter-spacing:-0.5px;">Exclude from parts lists</div>
<div class="a btn" style="left:220px;top:505px;width:70px;height:20px;"></div>
<div class="t" style="left:220px;top:509.99px;width:72px;text-align:center;font-size:11px;letter-spacing:-0.35px;color:#1a1a1a">&lt; Back</div>
<div class="a btn" style="left:304px;top:505px;width:70px;height:20px;"></div>
<div class="t" style="left:304px;top:509.99px;width:72px;text-align:center;font-size:11px;letter-spacing:-0.35px;color:#1a1a1a">Next &gt;</div>
<div class="a btndis" style="left:388px;top:505px;width:70px;height:20px;"></div>
<div class="t" style="left:388px;top:509.99px;width:72px;text-align:center;font-size:11px;letter-spacing:-0.35px;color:#9a9a9a">Finish</div>
<div class="a btn" style="left:472px;top:505px;width:70px;height:20px;"></div>
<div class="t" style="left:472px;top:509.99px;width:72px;text-align:center;font-size:11px;letter-spacing:-0.35px;color:#1a1a1a">Cancel</div>
<div class="a btn" style="left:556px;top:505px;width:70px;height:20px;"></div>
<div class="t" style="left:556px;top:509.99px;width:72px;text-align:center;font-size:11px;letter-spacing:-0.35px;color:#1a1a1a">Help</div>
<svg width="0" height="0" style="position:absolute"><defs><linearGradient id="gcyl" x1="0" x2="1" y1="0" y2="0"><stop offset="0" stop-color="#5f7878"/><stop offset="0.35" stop-color="#9cb4b4"/><stop offset="0.6" stop-color="#88a2a2"/><stop offset="1" stop-color="#5a7070"/></linearGradient><linearGradient id="gcyl2" x1="0" x2="1" y1="0" y2="0"><stop offset="0" stop-color="#6f8c8c"/><stop offset="0.3" stop-color="#c4e0e0"/><stop offset="0.5" stop-color="#7d9999"/><stop offset="0.7" stop-color="#c0dcdc"/><stop offset="1" stop-color="#6f8c8c"/></linearGradient><linearGradient id="gwas" x1="0" x2="0" y1="0" y2="1"><stop offset="0" stop-color="#4e6262"/><stop offset="0.45" stop-color="#7c9696"/><stop offset="1" stop-color="#58706f"/></linearGradient><linearGradient id="gnut" x1="0" x2="1" y1="0" y2="0"><stop offset="0" stop-color="#3e4646"/><stop offset="0.5" stop-color="#5e6868"/><stop offset="1" stop-color="#3e4646"/></linearGradient><pattern id="noise" width="16" height="16" patternUnits="userSpaceOnUse"><rect width="16" height="16" fill="#d0d0d0"/><rect x="10" y="4" width="2" height="1" fill="#c0c0c0"/><rect x="2" y="3" width="2" height="1" fill="#b6b6b6"/><rect x="6" y="1" width="1" height="1" fill="#eeeeee"/><rect x="2" y="7" width="2" height="1" fill="#eeeeee"/><rect x="1" y="3" width="2" height="2" fill="#e6e6e6"/><rect x="1" y="12" width="1" height="1" fill="#eeeeee"/><rect x="4" y="9" width="1" height="2" fill="#c0c0c0"/><rect x="3" y="9" width="2" height="1" fill="#f4f4f4"/><rect x="3" y="6" width="1" height="2" fill="#b6b6b6"/><rect x="2" y="1" width="1" height="1" fill="#f4f4f4"/><rect x="13" y="10" width="2" height="1" fill="#c0c0c0"/><rect x="11" y="9" width="1" height="2" fill="#e6e6e6"/><rect x="7" y="2" width="1" height="2" fill="#f4f4f4"/><rect x="15" y="10" width="1" height="1" fill="#dadada"/><rect x="2" y="3" width="1" height="1" fill="#f4f4f4"/><rect x="10" y="4" width="1" height="1" fill="#c0c0c0"/><rect x="2" y="10" width="2" height="1" fill="#b6b6b6"/><rect x="15" y="14" width="1" height="1" fill="#eeeeee"/><rect x="15" y="2" width="2" height="2" fill="#eeeeee"/><rect x="9" y="14" width="2" height="1" fill="#b6b6b6"/><rect x="11" y="0" width="1" height="1" fill="#c0c0c0"/><rect x="3" y="15" width="1" height="1" fill="#eeeeee"/><rect x="4" y="7" width="1" height="1" fill="#c0c0c0"/><rect x="2" y="5" width="1" height="2" fill="#c0c0c0"/><rect x="8" y="4" width="2" height="1" fill="#c0c0c0"/><rect x="13" y="11" width="1" height="1" fill="#dadada"/><rect x="4" y="2" width="1" height="1" fill="#e6e6e6"/><rect x="7" y="0" width="2" height="1" fill="#c0c0c0"/><rect x="8" y="9" width="1" height="1" fill="#eeeeee"/><rect x="11" y="10" width="2" height="2" fill="#e6e6e6"/><rect x="1" y="14" width="2" height="1" fill="#dadada"/><rect x="12" y="12" width="1" height="1" fill="#c0c0c0"/><rect x="12" y="1" width="1" height="1" fill="#e6e6e6"/><rect x="14" y="5" width="1" height="2" fill="#eeeeee"/><rect x="1" y="3" width="2" height="1" fill="#eeeeee"/><rect x="3" y="11" width="1" height="1" fill="#f4f4f4"/><rect x="6" y="12" width="2" height="1" fill="#e6e6e6"/><rect x="11" y="11" width="1" height="1" fill="#c0c0c0"/><rect x="15" y="14" width="1" height="1" fill="#c0c0c0"/><rect x="2" y="4" width="2" height="1" fill="#eeeeee"/></pattern></defs></svg>
<svg class="a" style="left:166px;top:163.5px" width="67" height="36" viewBox="0 0 67 36"><rect x="0" y="0" width="67" height="36" fill="#cdcdcd"/><rect x="2" y="2" width="64" height="33" fill="url(#noise)"/><path d="M0.9,36 V0.9 H67" stroke="#7a7a7a" stroke-width="1.8" fill="none"/><path d="M17.7,9 V30 Q17.7,34 23.5,34 H43.5 Q49.3,34 49.3,30 V9 Z" fill="url(#gcyl)"/><ellipse cx="33.5" cy="9" rx="15.8" ry="4.5" fill="#a4baba"/><ellipse cx="33.5" cy="9.3" rx="8.5" ry="2.8" fill="#6a8585"/><rect x="22.5" y="33" width="22" height="2" fill="#5e7070"/></svg>
<svg class="a" style="left:166px;top:201.8px" width="67" height="22" viewBox="0 0 67 22"><rect x="0" y="0" width="67" height="22" fill="#cdcdcd"/><path d="M0.9,22 V0.9 H67" stroke="#7a7a7a" stroke-width="1.8" fill="none"/><ellipse cx="33.5" cy="11.8" rx="28.5" ry="6.8" fill="url(#gwas)"/><ellipse cx="33.5" cy="9.8" rx="15.75" ry="2.4444444444444446" fill="#8aa6a6"/><ellipse cx="35.5" cy="9.8" rx="4" ry="1.6" fill="#e0f4f4"/><ellipse cx="31.5" cy="15.0" rx="5" ry="1.4" fill="#c8e4e4" opacity="0.8"/></svg>
<svg class="a" style="left:166.4px;top:226.6px" width="64" height="20.5" viewBox="0 0 64 20.5"><rect x="0" y="0" width="64" height="20.5" fill="#d6d6d6"/><ellipse cx="32.0" cy="11.05" rx="27.0" ry="6.05" fill="url(#gwas)"/><ellipse cx="32.0" cy="9.05" rx="15.0" ry="2.2777777777777777" fill="#8aa6a6"/><ellipse cx="34.0" cy="9.05" rx="4" ry="1.6" fill="#e0f4f4"/><ellipse cx="30.0" cy="14.25" rx="5" ry="1.4" fill="#c8e4e4" opacity="0.8"/></svg>
<svg class="a" style="left:166px;top:251.4px" width="67" height="36" viewBox="0 0 67 36"><rect x="0" y="0" width="67" height="36" fill="#cdcdcd"/><path d="M0.9,36 V0.9 H67" stroke="#7a7a7a" stroke-width="1.8" fill="none"/><rect x="4" y="3.5" width="60" height="30" fill="#8ea8a8"/><rect x="4" y="3.5" width="60" height="7" fill="#2e3032"/><path d="M18,33.5 V9 Q33.5,4.5 52,9 V33.5 Z" fill="url(#gcyl2)"/><ellipse cx="33.5" cy="33.2" rx="15" ry="2.8" fill="#d4d8d8"/></svg>
<svg class="a" style="left:166px;top:289.6px" width="67" height="36" viewBox="0 0 67 36"><rect x="0" y="0" width="67" height="36" fill="#cdcdcd"/><path d="M0.9,36 V0.9 H67" stroke="#7a7a7a" stroke-width="1.8" fill="none"/><rect x="4" y="3.5" width="60" height="30" fill="#8ea8a8"/><rect x="4" y="3.5" width="60" height="7" fill="#2e3032"/><path d="M18,33.5 V9 Q33.5,4.5 52,9 V33.5 Z" fill="url(#gcyl2)"/><ellipse cx="33.5" cy="33.2" rx="15" ry="2.8" fill="#d4d8d8"/></svg>
<svg class="a" style="left:166px;top:327.4px" width="67" height="23" viewBox="0 0 67 23"><rect x="0" y="0" width="67" height="23" fill="#cdcdcd"/><path d="M0.9,23 V0.9 H67" stroke="#7a7a7a" stroke-width="1.8" fill="none"/><ellipse cx="33.5" cy="12.3" rx="28.5" ry="7.3" fill="url(#gwas)"/><ellipse cx="33.5" cy="10.3" rx="15.75" ry="2.5555555555555554" fill="#8aa6a6"/><ellipse cx="35.5" cy="10.3" rx="4" ry="1.6" fill="#e0f4f4"/><ellipse cx="31.5" cy="15.5" rx="5" ry="1.4" fill="#c8e4e4" opacity="0.8"/></svg>
<svg class="a" style="left:166px;top:351.8px" width="64" height="21" viewBox="0 0 64 21"><rect x="0" y="0" width="64" height="21" fill="#d6d6d6"/><ellipse cx="32.0" cy="11.3" rx="27.0" ry="6.3" fill="url(#gwas)"/><ellipse cx="32.0" cy="9.3" rx="15.0" ry="2.3333333333333335" fill="#8aa6a6"/><ellipse cx="34.0" cy="9.3" rx="4" ry="1.6" fill="#e0f4f4"/><ellipse cx="30.0" cy="14.5" rx="5" ry="1.4" fill="#c8e4e4" opacity="0.8"/></svg>
<svg class="a" style="left:166.4px;top:377.3px" width="66" height="35" viewBox="0 0 66 35"><rect x="0" y="0" width="66" height="35" fill="#cdcdcd"/><path d="M0.9,35 V0.9 H66" stroke="#7a7a7a" stroke-width="1.8" fill="none"/><path d="M12.2,9 Q12.2,4.5 33.0,4.5 Q53.8,4.5 53.8,9 V27 Q53.8,31 33.0,31 Q12.2,31 12.2,27 Z" fill="url(#gnut)"/><ellipse cx="33.0" cy="8" rx="17" ry="3" fill="#6c7575"/><path d="M22.5,10.5 H43.5 V30.5 H22.5 Z" fill="#a8c6c6"/></svg>
<svg class="a" style="left:166.4px;top:415.5px" width="63.5" height="31.5" viewBox="0 0 63.5 31.5"><rect x="0" y="0" width="63.5" height="31.5" fill="#d0d0d0"/><path d="M10.95,9 Q10.95,4.5 31.75,4.5 Q52.55,4.5 52.55,9 V23.5 Q52.55,27.5 31.75,27.5 Q10.95,27.5 10.95,23.5 Z" fill="url(#gnut)"/><ellipse cx="31.75" cy="8" rx="17" ry="3" fill="#6c7575"/><path d="M21.25,10.5 H42.25 V27.0 H21.25 Z" fill="#a8c6c6"/></svg>
<svg class="a" style="left:166.4px;top:452px" width="62.5" height="20.5" viewBox="0 0 62.5 20.5"><rect x="0" y="0" width="62.5" height="20.5" fill="#c8c8c8"/><path d="M6,10 H44 L58,3.5 M44,10 L61,16.5" stroke="#6f8a8a" stroke-width="3.2" fill="none"/><path d="M6,10 H44 L58,3.5 M44,10 L61,16.5" stroke="#b4caca" stroke-width="1.3" fill="none"/><ellipse cx="6.5" cy="9.5" rx="4.2" ry="3" fill="none" stroke="#6f8a8a" stroke-width="2.2"/></svg>
</body></html>
